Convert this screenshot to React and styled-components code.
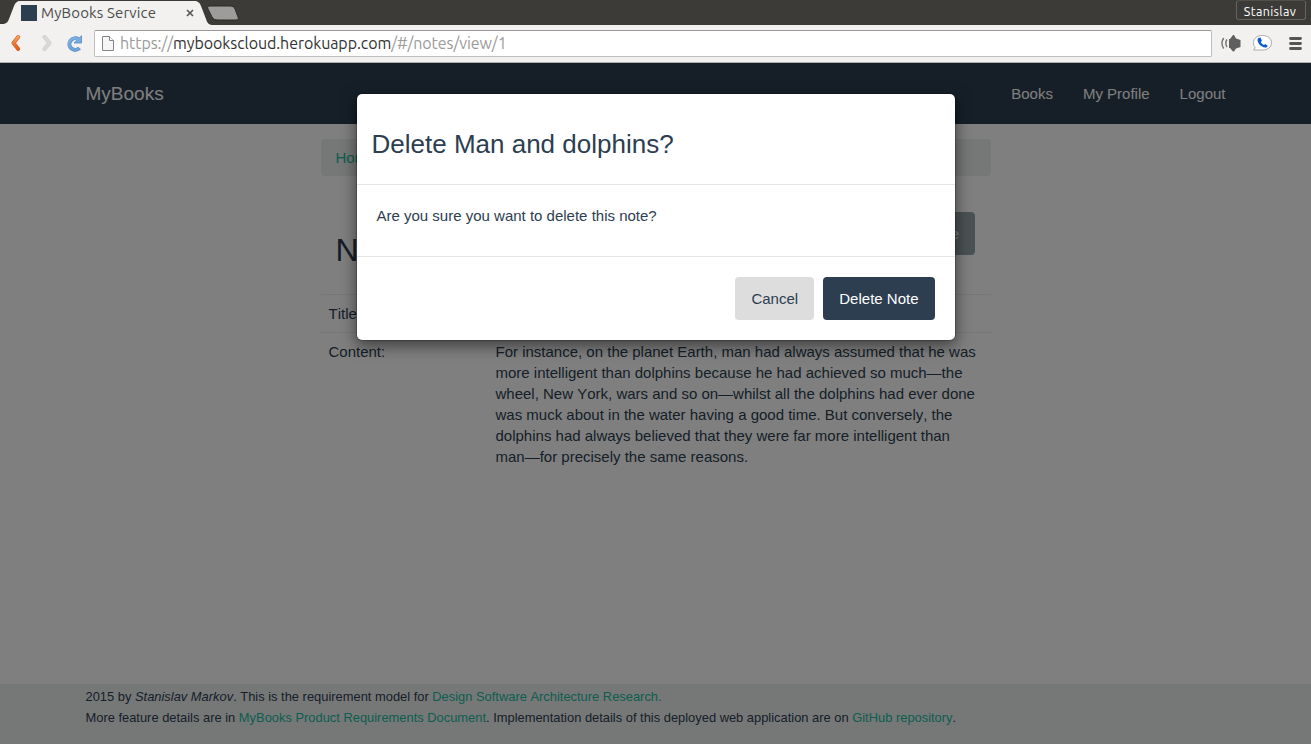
import React from "react";
import styled, { createGlobalStyle } from "styled-components";

const GlobalStyle = createGlobalStyle`
  * { box-sizing: border-box; }
  body {
    margin: 0;
    overflow: hidden;
    color: #2c3e50;
    font: 15px/21px "Liberation Sans", Arial, sans-serif;
    font-kerning: none;
  }
`;

const Window = styled.div`
  display: flex;
  flex-direction: column;
  height: 744px;
`;

const chromeFont = `"Ubuntu", "Noto Sans", "Open Sans", sans-serif`;

const TabStrip = styled.div`
  display: flex;
  height: 25px;
  background: #3c3b37;
  font-family: ${chromeFont};
`;

const Tab = styled.div`
  position: relative;
  display: flex;
  align-items: center;
  width: 208px;
  padding: 1px 0 0 21px;
  color: #4c4c4c;
`;

const TabShape = styled.svg`
  position: absolute;
  left: 0;
  top: 0;
`;

const Favicon = styled.span`
  position: relative;
  width: 16px;
  height: 16px;
  background: #2c3e50;
`;

const TabTitle = styled.span`
  position: relative;
  width: 119px;
  margin-left: 4px;
  font-size: 15px;
  letter-spacing: 0.15px;
  line-height: 20px;
  white-space: nowrap;
`;

const CloseIcon = styled.svg`
  position: relative;
  margin-left: 26px;
`;

const UserBadge = styled.div`
  width: 70px;
  height: 20px;
  margin: 0 5px 0 auto;
  padding-right: 2px;
  border: 1px solid #66645e;
  border-top-color: #504f4a;
  border-radius: 3px;
  color: #fff;
  font-size: 12.5px;
  letter-spacing: 0.35px;
  line-height: 20px;
  text-align: center;
`;

const Toolbar = styled.div`
  display: flex;
  align-items: center;
  height: 38px;
  padding-left: 9px;
  background: #f2f1f0;
  border-bottom: 1px solid #b0afad;
  font-family: ${chromeFont};
`;

const AddressBar = styled.div`
  display: flex;
  align-items: center;
  width: 1118px;
  height: 27px;
  margin-left: 8px;
  padding-left: 7px;
  background: #fff;
  border: 1px solid #bfbebc;
  border-top-color: #999;
  border-radius: 2px;
`;

const Url = styled.span`
  margin-left: 5px;
  color: #9b9b9b;
  font-size: 16px;
  letter-spacing: -0.08px;
  line-height: 23px;
  white-space: nowrap;
  b { color: #333; font-weight: 400; }
`;

const ToolIcons = styled.div`
  display: flex;
  align-items: center;
  gap: 9px;
  margin-left: 8px;
`;

const Page = styled.div`
  position: relative;
  display: flex;
  flex: 1;
  flex-direction: column;
  background: #fff;
`;

const Navbar = styled.nav`
  display: flex;
  align-items: center;
  justify-content: space-between;
  height: 61px;
  padding: 0 85.5px;
  background: #2c3e50;
  color: #fff;
`;

const Brand = styled.span`
  font-size: 19px;
`;

const NavLinks = styled.div`
  display: flex;
  gap: 30px;
`;

const Main = styled.main`
  flex: 1;
  width: 670px;
  margin: 15px auto 0;
`;

const Breadcrumb = styled.div`
  height: 37px;
  padding: 8px 15px;
  border-radius: 4px;
  background: #ecf0f1;
`;

const Link = styled.a`
  color: #18bc9c;
`;

const Heading = styled.div`
  display: flex;
  justify-content: space-between;
  align-items: flex-start;
  height: 118px;
  padding: 36px 15.5px 0 15px;
`;

const PageTitle = styled.h2`
  margin: 21px 0 0;
  font-size: 32px;
  font-weight: 400;
  line-height: 35px;
`;

const tones = {
  primary: ["#2c3e50", "#fff"],
  plain: ["#dddddd", "#2c3e50"],
  muted: ["#95a5a6", "#fff"],
};

const Button = styled.button`
  height: 43px;
  padding: 0 16px;
  border: 0;
  border-radius: 4px;
  background: ${(p) => tones[p.$tone][0]};
  color: ${(p) => tones[p.$tone][1]};
  font: inherit;
  font-kerning: none;
`;

const Row = styled.div`
  display: grid;
  grid-template-columns: 167px 1fr;
  border-top: 1px solid #ecf0f1;
`;

const Cell = styled.div`
  padding: 8px;
`;

const Footer = styled.footer`
  height: 60px;
  padding: 2px 85.5px;
  background: #ecf0f1;
  font-size: 12.9px;
`;

const Backdrop = styled.div`
  position: absolute;
  inset: 0;
  background: rgba(0, 0, 0, 0.5);
`;

const Modal = styled.section`
  position: absolute;
  top: 30px;
  left: 50%;
  width: 600px;
  margin-left: -300px;
  border: 1px solid rgba(0, 0, 0, 0.2);
  border-radius: 6px;
  background: #fff;
  background-clip: padding-box;
  box-shadow: 0 5px 15px rgba(0, 0, 0, 0.5);
`;

const ModalHeader = styled.header`
  height: 91px;
  padding: 36px 15px 0;
  border-bottom: 1px solid #e5e5e5;
`;

const ModalTitle = styled.h3`
  margin: 0;
  font-size: 26px;
  font-weight: 400;
  line-height: 28px;
`;

const ModalBody = styled.div`
  height: 71px;
  padding: 20px;
`;

const ModalFooter = styled.footer`
  display: flex;
  justify-content: flex-end;
  gap: 9.17px;
  height: 84px;
  padding: 20px;
  border-top: 1px solid #e5e5e5;
`;

function TabOutline() {
  return (
    <TabShape width="242" height="25">
      <path d="M0 25V24H2C6 24 8 22 9 19L14 6C15 3 17 1 20 1H194C198 1 200 3 201 6L206 19C207 22 208 24.500 212 25Z" fill="#f2f1f0" />
      <path d="M210 6H230C233 6 234 7 235 9L238 17C239 19 238 20 236 20H218C215 20 213 19 212 17L208 9C207 7 208 6 210 6Z" fill="#9d9c9a" stroke="#2c2b28" />
    </TabShape>
  );
}

function NavigationIcons() {
  return (
    <svg width="77" height="25" viewBox="0 0 77 25" fill="none" strokeLinecap="round" strokeLinejoin="round">
      <defs>
        <linearGradient id="orange" gradientUnits="userSpaceOnUse" x1="0" y1="4" x2="0" y2="20">
          <stop stopColor="#f5ac68" />
          <stop offset="1" stopColor="#e2500f" />
        </linearGradient>
        <linearGradient id="blue" gradientUnits="userSpaceOnUse" x1="0" y1="4" x2="0" y2="20">
          <stop stopColor="#85b5e4" />
          <stop offset="1" stopColor="#6a9fd8" />
        </linearGradient>
      </defs>
      <path d="M9.200 6L4.500 12L9.200 18" stroke="#d26a31" strokeWidth="4" />
      <path d="M9.200 6L4.500 12L9.200 18" stroke="url(#orange)" strokeWidth="2.800" />
      <path d="M35.500 6L40.500 12L35.500 18" stroke="#cac8c6" strokeWidth="4" />
      <path d="M35.500 6L40.500 12L35.500 18" stroke="#dbd9d7" strokeWidth="2.800" />
      <path d="M69.500 8.300A5.800 5.800 0 1 0 70.500 17" stroke="#568bc4" strokeWidth="4" strokeLinecap="butt" />
      <path d="M72.500 5V12H65L67.200 9.700L70.200 7.200Z" fill="#76a9de" stroke="#568bc4" strokeWidth=".8" />
      <path d="M69.700 8.600A5.800 5.800 0 1 0 70.200 17" stroke="url(#blue)" strokeWidth="2.700" strokeLinecap="butt" />
    </svg>
  );
}

function FileIcon() {
  return (
    <svg width="13" height="15" viewBox="0 0 13 15">
      <path d="M.5 .5H7.500L11.500 4.500V14.500H.5Z" fill="#f6f6f6" stroke="#858585" />
      <path d="M7.500 .5V4.500H11.500" fill="#fff" stroke="#858585" />
    </svg>
  );
}

function SpeakerIcon() {
  return (
    <svg width="22" height="21" viewBox="0 0 22 21" fill="none" stroke="#777" strokeWidth="1.500">
      <path d="M9 6H10L13 2H14L16 5.500L20.500 7V14L16 15.500L14 18.500H13L10 15H9Z" fill="#5f5f5f" stroke="none" />
      <path d="M7 6.500Q4.600 10 7 14M3.700 5Q.2 10 3.700 15.500" />
    </svg>
  );
}

function PhoneIcon() {
  return (
    <svg width="22" height="21" viewBox="0 0 22 21">
      <path d="M11.500 2.500C16.500 2.500 20.500 5.300 20.500 9.700C20.500 14.300 16.500 17 11.500 17H2.500L4.300 14.800C3 13.500 2.500 11.500 2.500 9.700C2.500 5.300 6.500 2.500 11.500 2.500Z" fill="#fff" stroke="#aaa" />
      <path d="M7.700 5L9.500 4.600L11 7.800L9.700 9C10.500 10.400 11.500 11.300 13 12L14.200 10.900L16.700 12.700C16.300 14 15.500 14.700 14.100 14.500C10 14 6.800 10.500 6.500 7C6.500 6 6.800 5.400 7.700 5Z" fill="#0c5bd2" />
    </svg>
  );
}

const MenuGlyph = styled.svg`
  margin-left: 6px;
`;

function MenuIcon() {
  return (
    <MenuGlyph width="14" height="15" viewBox="0 0 14 15" fill="none" stroke="#555" strokeWidth="2.800" strokeLinecap="round">
      <path d="M2.500 2.500H12.500M2.500 7.500H12.500M2.500 12.500H12.500" />
    </MenuGlyph>
  );
}

export default function App() {
  return (
    <>
      <GlobalStyle />
      <Window>
        <TabStrip>
          <Tab>
            <TabOutline />
            <Favicon />
            <TabTitle>MyBooks Service</TabTitle>
            <CloseIcon width="8" height="8" viewBox="0 0 8 8">
              <path d="M1 1L7 7M7 1L1 7" stroke="#555" strokeWidth="1.600" />
            </CloseIcon>
          </Tab>
          <UserBadge>Stanislav</UserBadge>
        </TabStrip>
        <Toolbar>
          <NavigationIcons />
          <AddressBar>
            <FileIcon />
            <Url>https://<b>mybookscloud.herokuapp.com</b>/#/notes/view/1</Url>
          </AddressBar>
          <ToolIcons>
            <SpeakerIcon />
            <PhoneIcon />
            <MenuIcon />
          </ToolIcons>
        </Toolbar>
        <Page>
          <Navbar>
            <Brand>MyBooks</Brand>
            <NavLinks>
              <span>Books</span>
              <span>My Profile</span>
              <span>Logout</span>
            </NavLinks>
          </Navbar>
          <Main>
            <Breadcrumb><Link>Home</Link></Breadcrumb>
            <Heading>
              <PageTitle>Note</PageTitle>
              <Button $tone="muted">Delete</Button>
            </Heading>
            <Row>
              <Cell>Title:</Cell>
              <Cell>Man and dolphins</Cell>
            </Row>
            <Row>
              <Cell>Content:</Cell>
              <Cell>
                For instance, on the planet Earth, man had always assumed that he was more intelligent than
                dolphins because he had achieved so much—the wheel, New York, wars and so on—whilst all the
                dolphins had ever done was muck about in the water having a good time. But conversely, the
                dolphins had always believed that they were far more intelligent than man—for precisely the
                same reasons.
              </Cell>
            </Row>
          </Main>
          <Footer>
            <div>
              2015 by <i>Stanislav Markov</i>. This is the requirement model for{" "}
              <Link>Design Software Architecture Research.</Link>
            </div>
            <div>
              More feature details are in <Link>MyBooks Product Requirements Document</Link>. Implementation
              details of this deployed web application are on <Link>GitHub repository</Link>.
            </div>
          </Footer>
          <Backdrop />
          <Modal>
            <ModalHeader>
              <ModalTitle>Delete Man and dolphins?</ModalTitle>
            </ModalHeader>
            <ModalBody>Are you sure you want to delete this note?</ModalBody>
            <ModalFooter>
              <Button $tone="plain">Cancel</Button>
              <Button $tone="primary">Delete Note</Button>
            </ModalFooter>
          </Modal>
        </Page>
      </Window>
    </>
  );
}
